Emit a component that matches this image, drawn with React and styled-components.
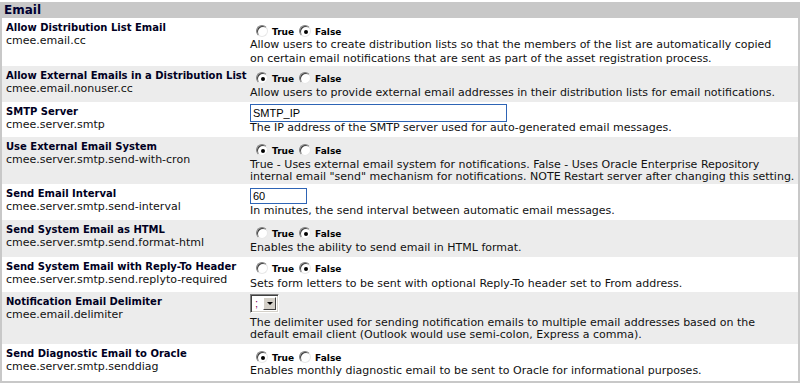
import React from 'react';
import styled, { createGlobalStyle } from 'styled-components';

const GlobalStyle = createGlobalStyle`
  body {
    margin: 0;
    background: #fff;
    font-family: "DejaVu Sans", Verdana, sans-serif;
    color: #000;
  }
`

const Panel = styled.div`
  margin-top: 2px;
  width: 800px;
  box-sizing: border-box;
  border: 2px solid #c8c8c8;
  border-top: none;
  overflow: hidden;
`

const Header = styled.div`
  height: 16px;
  line-height: 16px;
  background: #c8c8c8;
  padding-left: 2px;
  font-size: 12px;
  font-weight: bold;
  color: #000033;
`

const Row = styled.div`
  display: grid;
  grid-template-columns: 248px 1fr;
  height: ${p => p.$h}px;
  background: ${p => (p.$alt ? '#ececec' : '#fff')};
`

const LabelCell = styled.div`
  padding: 3px 0 0 4px;
  line-height: 13px;
`

const Name = styled.div`
  font-size: 10px;
  font-weight: bold;
  color: #000022;
`

const Key = styled.div`
  font-size: 11px;
  color: #111;
`

const ValueCell = styled.div`
  padding-top: ${p => p.$pad}px;
  font-size: 11px;
  min-width: 0;
`

const RadioLine = styled.div`
  display: flex;
  align-items: flex-end;
  height: 16px;
  padding-left: 6px;
`

const Circle = styled.span`
  width: 12px;
  height: 12px;
  box-sizing: border-box;
  border-radius: 50%;
  border: 1px solid;
  border-color: #808080 #e8e8e8 #e8e8e8 #808080;
  box-shadow: inset 1px 1px 0 #404040;
  background: #fff;
  margin-bottom: 1px;
  display: flex;
  align-items: center;
  justify-content: center;
  flex-shrink: 0;

  &::after {
    content: '';
    width: 4px;
    height: 4px;
    border-radius: 50%;
    background: ${p => (p.$on ? '#000' : 'transparent')};
    margin: 1px 0 0 1px;
  }
`

const RadioText = styled.span`
  font-weight: bold;
  font-size: 9px;
  line-height: 11px;
  margin: 0 5px 0 4px;
  color: #000;
`

const Desc = styled.div`
  margin-top: ${p => p.$gap || 0}px;
  line-height: ${p => p.$lh || 14}px;
  white-space: nowrap;
  color: #111;
`

const TextBox = styled.input`
  display: block;
  box-sizing: border-box;
  width: ${p => p.$w}px;
  height: ${p => p.$h}px;
  margin: 0;
  padding: 0 2px;
  border: 1px solid #2e64b5;
  background: #fff;
  font-family: "Liberation Sans", Arial, sans-serif;
  font-size: 11px;
  color: #000;
  outline: none;
`

const Select = styled.div`
  display: flex;
  box-sizing: border-box;
  width: 29px;
  height: 19px;
  border: 1px solid;
  border-color: #808080 #fff #fff #808080;
  box-shadow: inset 1px 1px 0 #404040, inset -1px -1px 0 #d4d0c8;
  background: #fff;
  padding: 2px;
`

const SelectValue = styled.span`
  flex: 1;
  font-family: "Liberation Sans", Arial, sans-serif;
  font-size: 11px;
  line-height: 13px;
  padding-left: 2px;
  color: #800060;
`

const SelectButton = styled.span`
  width: 13px;
  box-sizing: border-box;
  background: #d4d0c8;
  border: 1px solid;
  border-color: #fff #404040 #404040 #fff;
  display: flex;
  align-items: center;
  justify-content: center;

  &::after {
    content: '';
    border-left: 3px solid transparent;
    border-right: 3px solid transparent;
    border-top: 3px solid #000;
  }
`

function Radios({ value }) {
  return (
    <RadioLine>
      <Circle $on={value === true} />
      <RadioText>True</RadioText>
      <Circle $on={value === false} />
      <RadioText>False</RadioText>
    </RadioLine>
  );
}

function Setting({ name, keyName, h, alt, pad, children }) {
  return (
    <Row $h={h} $alt={alt}>
      <LabelCell>
        <Name>{name}</Name>
        <Key>{keyName}</Key>
      </LabelCell>
      <ValueCell $pad={pad}>{children}</ValueCell>
    </Row>
  );
}

export default function App() {
  return (
    <>
      <GlobalStyle />
      <Panel>
        <Header>Email</Header>

        <Setting name="Allow Distribution List Email" keyName="cmee.email.cc" h={48} pad={4}>
          <Radios value={false} />
          <Desc>
            Allow users to create distribution lists so that the members of the list are automatically copied
            <br />
            on certain email notifications that are sent as part of the asset registration process.
          </Desc>
        </Setting>

        <Setting name="Allow External Emails in a Distribution List" keyName="cmee.email.nonuser.cc" h={36} alt pad={3}>
          <Radios value={true} />
          <Desc $gap={1}>
            Allow users to provide external email addresses in their distribution lists for email notifications.
          </Desc>
        </Setting>

        <Setting name="SMTP Server" keyName="cmee.server.smtp" h={35} pad={2}>
          <TextBox $w={257} $h={18} defaultValue="SMTP_IP" />
          <Desc $lh={12}>The IP address of the SMTP server used for auto-generated email messages.</Desc>
        </Setting>

        <Setting name="Use External Email System" keyName="cmee.server.smtp.send-with-cron" h={47} alt pad={4}>
          <Radios value={true} />
          <Desc $gap={2} $lh={12}>
            True - Uses external email system for notifications. False - Uses Oracle Enterprise Repository
            <br />
            internal email "send" mechanism for notifications. NOTE Restart server after changing this setting.
          </Desc>
        </Setting>

        <Setting name="Send Email Interval" keyName="cmee.server.smtp.send-interval" h={36} pad={4}>
          <TextBox $w={57} $h={16} defaultValue="60" />
          <Desc>In minutes, the send interval between automatic email messages.</Desc>
        </Setting>

        <Setting name="Send System Email as HTML" keyName="cmee.server.smtp.send.format-html" h={37} alt pad={4}>
          <Radios value={false} />
          <Desc $gap={1}>Enables the ability to send email in HTML format.</Desc>
        </Setting>

        <Setting name="Send System Email with Reply-To Header" keyName="cmee.server.smtp.send.replyto-required" h={35} pad={2}>
          <Radios value={false} />
          <Desc $gap={2}>Sets form letters to be sent with optional Reply-To header set to From address.</Desc>
        </Setting>

        <Setting name="Notification Email Delimiter" keyName="cmee.email.delimiter" h={52} alt pad={2}>
          <Select>
            <SelectValue>;</SelectValue>
            <SelectButton />
          </Select>
          <Desc $gap={4} $lh={12}>
            The delimiter used for sending notification emails to multiple email addresses based on the
            <br />
            default email client (Outlook would use semi-colon, Express a comma).
          </Desc>
        </Setting>

        <Setting name="Send Diagnostic Email to Oracle" keyName="cmee.server.smtp.senddiag" h={37} pad={4}>
          <Radios value={true} />
          <Desc>Enables monthly diagnostic email to be sent to Oracle for informational purposes.</Desc>
        </Setting>
      </Panel>
    </>
  );
}
